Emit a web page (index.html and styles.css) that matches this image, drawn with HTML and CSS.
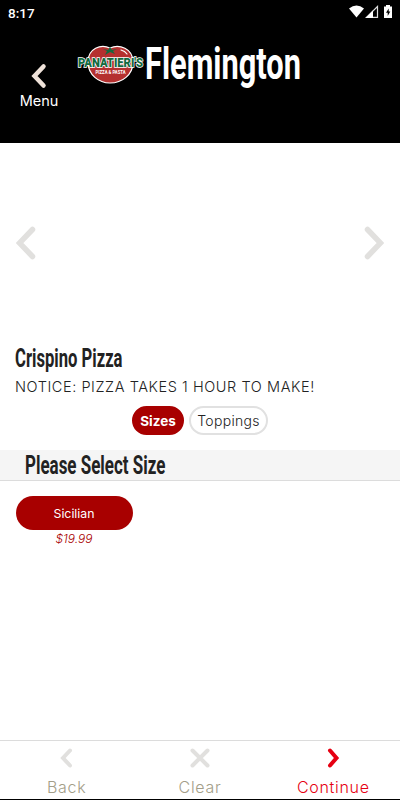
FILE: index.html
```
<!DOCTYPE html>
<html lang="en">

<head>
    <meta charset="UTF-8">
    <meta name="viewport" content="width=device-width, initial-scale=1.0">

    <title>Crispino Pizza</title>

    <link rel="stylesheet" href="styles.css">
</head>

<body>

    <header>
        <div class="status-bar">
            <span class="time">8:17</span>
            <svg class="status-icons" width="44" height="16" viewBox="0 0 44 16">
                <path d="M0 3.500 Q7.500 -2.500 15 3.500 L7.500 12.500 Z" fill="#fff"/>
                <path d="M28.500 1.500 V12.300 H17.500 Z" fill="none" stroke="#ddd" stroke-width="1.200"/>
                <path d="M24 5.500 V13 H16.500 Z" fill="#fff"/>
                <path d="M37 0 H41 V1.500 H43 V13 H35 V1.500 H37 Z" fill="#fff"/>
                <path d="M39.700 3.500 L37 7.800 H38.700 V11 L41.300 6.600 H39.700 Z" fill="#000"/>
            </svg>
        </div>
        <div class="title-bar">
            <a class="menu">
                <svg width="16" height="26" viewBox="0 0 16 26"><path d="M12.500 3.500 L3.500 13 L12.500 22.500"/></svg>
                <span>Menu</span>
            </a>
            <svg class="logo" width="68" height="40" viewBox="0 0 68 40">
                <path d="M33 3 C24 -1 11 3 11 17 C11 30 22 38 33 38 C45 38 56 30 56 17 C56 3 42 -1 33 3 Z" fill="#b5302f" stroke="#fff" stroke-width="1.200"/>
                <path d="M26 4 L31 5 L33 2 L35 5 L40 4 L36 6 L38 9 L33 7 L28 10 L30 6 Z" fill="#14693f"/>
                <path d="M44 5 Q48 6 50 9" fill="none" stroke="#fff" stroke-width="1.200"/>
                <text class="logo-name" x="1" y="21.500" textLength="65" lengthAdjust="spacingAndGlyphs">PANATIERI'S</text>
                <text class="logo-sub" x="18.500" y="28.500" textLength="30" lengthAdjust="spacingAndGlyphs">PIZZA &amp; PASTA</text>
            </svg>
            <h1>Flemington</h1>
        </div>
    </header>

    <div class="carousel">
        <svg width="20" height="36" viewBox="0 0 20 36"><path d="M16.500 4.500 L3.500 18 L16.500 31.500"/></svg>
        <svg width="20" height="36" viewBox="0 0 20 36"><path d="M3.500 4.500 L16.500 18 L3.500 31.500"/></svg>
    </div>

    <div class="item">
        <h2>Crispino Pizza</h2>
        <p class="notice">NOTICE: PIZZA TAKES 1 HOUR TO MAKE!</p>
        <div class="tabs">
            <button class="tab active"><span>Sizes</span></button>
            <button class="tab"><span>Toppings</span></button>
        </div>
    </div>

    <div class="section-title">
        <h2>Please Select Size</h2>
    </div>

    <div class="options">
        <div class="option">
            <button>Sicilian</button>
            <p class="price">$19.99</p>
        </div>
    </div>

    <footer>
        <a class="back">
            <svg width="20" height="20" viewBox="0 0 20 20"><path d="M13 2.500 L6 10 L13 17.500"/></svg>
            <span>Back</span>
        </a>
        <a class="clear">
            <svg width="20" height="20" viewBox="0 0 20 20"><path d="M2.500 2.500 L17.500 17.500 M17.500 2.500 L2.500 17.500"/></svg>
            <span>Clear</span>
        </a>
        <a class="continue">
            <svg width="20" height="20" viewBox="0 0 20 20"><path d="M7 2.500 L13.500 10 L7 17.500"/></svg>
            <span>Continue</span>
        </a>
    </footer>

</body>

</html>
```
FILE: styles.css
```
* {
    box-sizing: border-box;
}

body {
    font-family: Inter, 'Open Sans', sans-serif;
    font-weight: 300;
    background-color: #fff;
    color: #222;
    margin: 0;
    height: 800px;
    display: flex;
    flex-direction: column;
    overflow: hidden;
}

h1, h2, p {
    margin: 0;
    white-space: nowrap;
}

h1, h2 {
    font-family: Roboto, sans-serif;
    font-weight: 700;
    transform-origin: 0 50%;
}

h2 {
    font-size: 26px;
    line-height: 30px;
    transform: scaleX(0.64);
}

svg {
    display: block;
    flex: none;
}

svg path {
    stroke-linecap: round;
}

button {
    font-family: inherit;
    padding: 0;
    border: none;
}

header {
    background-color: #000;
    color: #fff;
    height: 143px;
}

.status-bar {
    height: 25px;
    padding: 5px 7px 0 8px;
    display: flex;
    justify-content: space-between;
}

.time {
    font-family: Roboto, sans-serif;
    font-weight: 500;
    font-size: 13.5px;
    line-height: 16px;
}

.status-icons path {
    stroke-linecap: butt;
}

.title-bar {
    display: flex;
    padding-left: 19px;
}

.menu {
    width: 40px;
    padding-top: 38px;
    display: flex;
    flex-direction: column;
    align-items: center;
    font-size: 14.5px;
    line-height: 18px;
    font-weight: 400;
}

.menu span {
    margin-top: 3px;
}

.menu path {
    fill: none;
    stroke: #efe2d9;
    stroke-width: 4.5;
}

.logo {
    margin: 20px 0 0 18px;
    overflow: visible;
}

.logo-name {
    font-family: Roboto, sans-serif;
    font-weight: 900;
    font-size: 12px;
    fill: #14693f;
    stroke: #fff;
    stroke-width: 1.5;
    paint-order: stroke;
}

.logo-sub {
    font-family: Roboto, sans-serif;
    font-weight: 700;
    font-size: 4.5px;
    fill: #fff;
}

h1 {
    font-size: 45px;
    line-height: 50px;
    padding-top: 14px;
    transform: scaleX(0.684);
}

.carousel {
    height: 200px;
    padding: 0 16px;
    display: flex;
    justify-content: space-between;
    align-items: center;
}

.carousel path {
    fill: none;
    stroke: #e1e0de;
    stroke-width: 5.5;
}

.item {
    height: 107px;
    padding-left: 15px;
}

.notice {
    font-size: 14.5px;
    line-height: 20px;
    letter-spacing: 0.57px;
    margin-top: 4px;
}

.tabs {
    display: flex;
    gap: 5px;
    margin: 9px 0 0 117px;
}

.tab {
    width: 79px;
    height: 29px;
    border: 2px solid #e1e1e1;
    border-radius: 15px;
    background-color: #fff;
    color: #222;
    font-size: 14px;
    font-weight: 300;
    letter-spacing: 0.3px;
}

.tab.active {
    width: 52px;
    border-color: #a80000;
    background-color: #a80000;
    color: #fff;
    font-weight: 700;
    font-size: 13.5px;
    letter-spacing: 0;
}

.section-title {
    height: 31px;
    padding-left: 25px;
    background-color: #f5f5f5;
    border-bottom: 1px solid #dcdcdc;
}

.section-title h2 {
    transform: scaleX(0.652);
}

.options {
    flex: 1;
    padding: 15px;
}

.option {
    width: 118px;
    text-align: center;
}

.option button {
    width: 117px;
    height: 34px;
    border-radius: 17px;
    background-color: #a80000;
    color: #fff;
    font-size: 12.3px;
}

.price {
    color: #a80000;
    font-size: 12px;
    line-height: 18px;
    font-style: italic;
}

footer {
    height: 60px;
    padding-top: 7px;
    border-top: 1px solid #dcdcdc;
    border-bottom: 1px solid #000;
    display: flex;
    color: #a39e88;
}

footer a {
    flex: 1;
    display: flex;
    flex-direction: column;
    align-items: center;
    font-size: 16px;
    line-height: 20px;
    letter-spacing: 0.7px;
}

footer span {
    margin-top: 9px;
}

footer path {
    fill: none;
    stroke: #e1e0de;
    stroke-width: 4;
}

.continue {
    color: #e60012;
}

.continue path {
    stroke: #e60012;
}
```
